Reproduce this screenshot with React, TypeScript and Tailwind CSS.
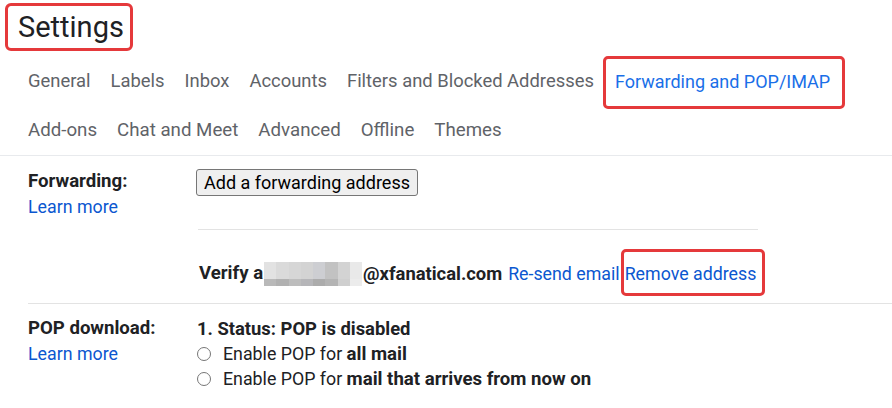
import React from "react";

const tabsTop = ["General", "Labels", "Inbox", "Accounts", "Filters and Blocked Addresses"];
const tabsBottom = ["Add-ons", "Chat and Meet", "Advanced", "Offline", "Themes"];

// pixelated blur over the hidden part of the address
const mosaicTop = ["#e2e2e2", "#dadada", "#d6d6d6", "#d3d3d3", "#cdced2", "#c2c2c2", "#d3d3d3", "#e9e9e9"];
const mosaicBottom = ["#b9b9b9", "#b1b1b1", "#bdbdbd", "#b6b6b9", "#acacac", "#b4b4b4", "#cfcfcf", "#ececec"];

function Mosaic() {
  return (
    <span className="inline-flex flex-col w-[98px] h-[24px] align-middle mx-[1px]">
      <span className="flex h-[17px]">
        {mosaicTop.map((c, i) => (
          <span key={i} className="flex-1" style={{ background: c }} />
        ))}
      </span>
      <span className="flex h-[7px]">
        {mosaicBottom.map((c, i) => (
          <span key={i} className="flex-1" style={{ background: c }} />
        ))}
      </span>
    </span>
  );
}

function Radio({ children }: { children: React.ReactNode }) {
  return (
    <div className="flex items-center h-[25px]">
      <span className="w-[14px] h-[14px] rounded-full border border-[#767676] bg-white mr-[12px]" />
      <span>{children}</span>
    </div>
  );
}

export default function App() {
  return (
    <div className="w-[892px] h-[408px] bg-white overflow-hidden text-[#202124] font-['Roboto',sans-serif]">
      {/* Title */}
      <div className="pt-[3px] pl-[5px]">
        <div className="w-[128px] h-[48px] border-[3px] border-[#e5393b] rounded-[6px] flex items-center pl-[10px]">
          <h1 className="text-[29px] leading-none text-[#202124]">Settings</h1>
        </div>
      </div>

      {/* Tabs */}
      <div className="mt-[5px] border-b border-[#e8eaed] text-[18.4px] text-[#5f6368]">
        <div className="h-[50px] flex items-center gap-[20px] pl-[28px]">
          {tabsTop.map((t) => (
            <span key={t}>{t}</span>
          ))}
          <span className="relative text-[#1a6fe8] ml-[1px] text-[18px]">
            Forwarding and POP/IMAP
            <span className="absolute left-[-12px] right-[-15px] top-[-12px] bottom-[-14px] border-[3px] border-[#e5393b] rounded-[5px]" />
          </span>
        </div>
        <div className="h-[49px] flex items-center gap-[20px] pl-[28px] text-[18.7px]">
          {tabsBottom.map((t) => (
            <span key={t}>{t}</span>
          ))}
        </div>
      </div>

      {/* Forwarding */}
      <div className="flex pl-[28px] pt-[13px] text-[17.8px] leading-[25px]">
        <div className="w-[168px] shrink-0">
          <div className="font-bold text-[18.6px]">Forwarding:</div>
          <a className="text-[#0b57d0]">Learn more</a>
        </div>
        <div className="flex-1">
          <button className="h-[27px] px-[7px] bg-[#efefef] border border-[#767676] rounded-[3px] text-[18px] leading-none text-black">
            Add a forwarding address
          </button>
          <div className="mt-[33px] w-[560px] ml-[2px] border-t border-[#e3e3e3]" />
          <div className="pt-[31px] pb-[17px] pl-[3px] flex items-center whitespace-nowrap">
            <span className="font-bold text-[18.6px]">Verify a</span>
            <Mosaic />
            <span className="font-bold text-[18.4px]">@xfanatical.com</span>
            <a className="ml-[6px] text-[#0b57d0]">Re-send email</a>
            <a className="relative ml-[5px] text-[#0b57d0]">
              Remove address
              <span className="absolute left-[-4px] right-[-9px] top-[-12px] bottom-[-10px] border-[3px] border-[#e5393b] rounded-[5px]" />
            </a>
          </div>
        </div>
      </div>

      {/* POP download */}
      <div className="ml-[28px] border-t border-[#e3e3e3] flex pt-[12px] text-[17.8px] leading-[25px]">
        <div className="w-[168px] shrink-0">
          <div className="font-bold text-[18.6px]">POP download:</div>
          <a className="text-[#0b57d0]">Learn more</a>
        </div>
        <div className="flex-1 pl-[1px]">
          <div className="font-bold text-[18.4px]">1. Status: POP is disabled</div>
          <Radio>
            Enable POP for <b className="text-[18.6px]">all mail</b>
          </Radio>
          <Radio>
            Enable POP for <b className="text-[18.6px]">mail that arrives from now on</b>
          </Radio>
        </div>
      </div>
    </div>
  );
}
